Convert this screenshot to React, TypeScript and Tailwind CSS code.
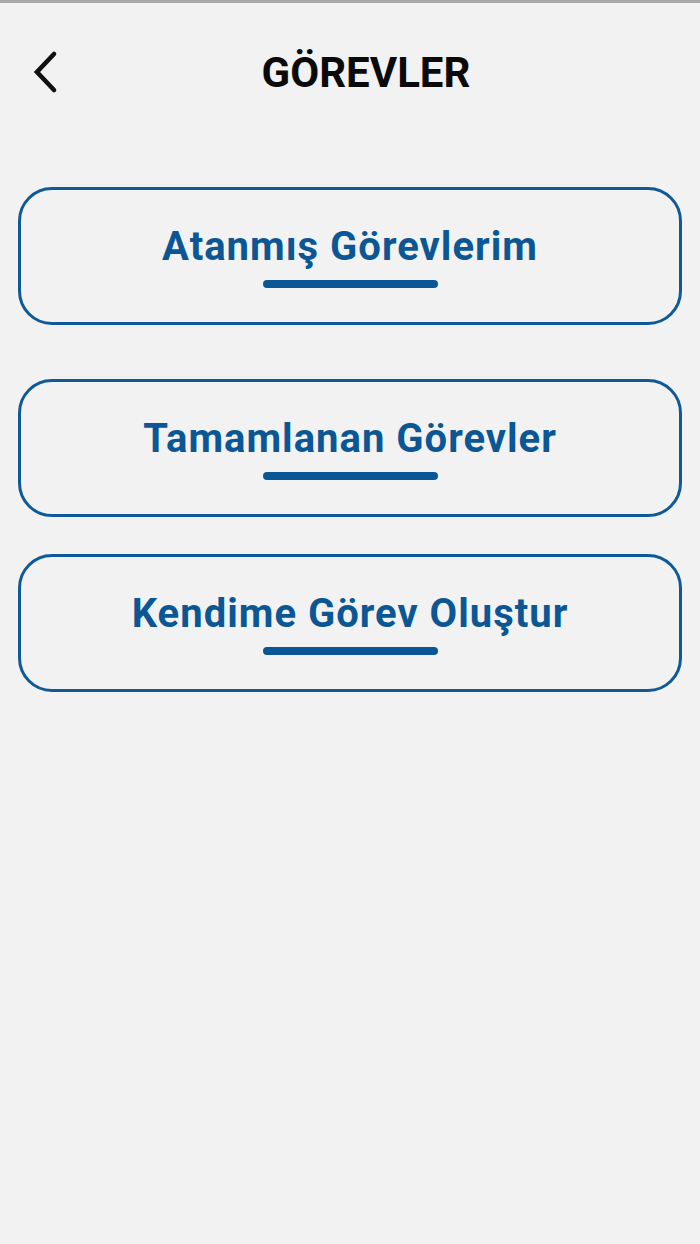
import React from "react";

const items = ["Atanmış Görevlerim", "Tamamlanan Görevler", "Kendime Görev Oluştur"];

function Card({ label, className }: { label: string; className?: string }) {
  return (
    <div
      className={`mx-[18px] h-[138px] rounded-[34px] border-[3px] border-[#0e5a98] flex flex-col items-center pt-[33px] ${className ?? ""}`}
    >
      <div className="text-[40px] leading-[48px] font-bold text-[#0b5796] tracking-[1px] whitespace-nowrap">{label}</div>
      <div className="mt-[9px] w-[175px] h-[8px] rounded-full bg-[#0b5796]" />
    </div>
  );
}

export default function App() {
  return (
    <div
      className="w-[700px] h-[1244px] bg-[#f2f2f2] flex flex-col"
      style={{ fontFamily: "Roboto, 'Noto Sans', sans-serif" }}
    >
      <div className="h-[3px] bg-[#a9a9a9]" />
      <div className="relative h-[136px] flex items-start">
        <svg
          className="absolute left-[30px] top-[46px]"
          width="34"
          height="52"
          viewBox="0 0 34 52"
          fill="none"
        >
          <path d="M24 5 L7 23 L24 41" stroke="#111" strokeWidth="4.6" strokeLinecap="round" strokeLinejoin="miter" />
        </svg>
        <div className="w-full text-center pl-[32px] pt-[46px] text-[42px] leading-[48px] font-bold text-[#0a0a0a]">
          GÖREVLER
        </div>
      </div>
      <div className="mt-[48px]">
        <Card label={items[0]} />
        <Card label={items[1]} className="mt-[54px]" />
        <Card label={items[2]} className="mt-[37px]" />
      </div>
    </div>
  );
}
